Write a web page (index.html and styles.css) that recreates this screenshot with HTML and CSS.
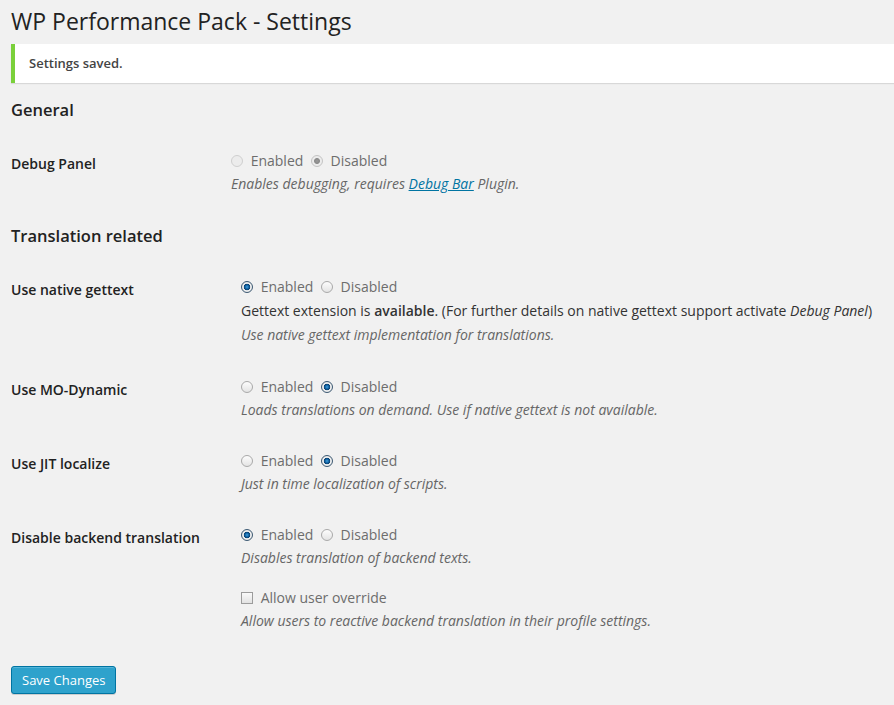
FILE: index.html
```html
<!DOCTYPE html>
<html lang="en">
<head>
    <meta charset="UTF-8">
    <title>WP Performance Pack - Settings</title>
    <link rel="stylesheet" href="styles.css">
</head>
<body>
    <div class="wrap">
        <h2 class="page-title">WP Performance Pack - Settings</h2>

        <div class="notice updated">
            <p>Settings saved.</p>
        </div>

        <form>
            <h3 class="section-title">General</h3>
            <table class="form-table">
                <tr>
                    <th>Debug Panel</th>
                    <td>
                        <label class="choice is-disabled"><input type="radio" name="debug" disabled> Enabled</label>
                        <label class="choice is-disabled"><input type="radio" name="debug" checked disabled> Disabled</label>
                        <p class="description">Enables debugging, requires <a href="#">Debug Bar</a> Plugin.</p>
                    </td>
                </tr>
            </table>

            <h3 class="section-title">Translation related</h3>
            <table class="form-table form-table-wide">
                <tr class="row-gettext">
                    <th>Use native gettext</th>
                    <td>
                        <label class="choice"><input type="radio" name="gettext" checked> Enabled</label>
                        <label class="choice"><input type="radio" name="gettext"> Disabled</label>
                        <p class="info">Gettext extension is <strong>available</strong>. (For further details on native gettext support activate <em>Debug Panel</em>)</p>
                        <p class="description info-after">Use native gettext implementation for translations.</p>
                    </td>
                </tr>
                <tr>
                    <th>Use MO-Dynamic</th>
                    <td>
                        <label class="choice"><input type="radio" name="mo"> Enabled</label>
                        <label class="choice"><input type="radio" name="mo" checked> Disabled</label>
                        <p class="description">Loads translations on demand. Use if native gettext is not available.</p>
                    </td>
                </tr>
                <tr>
                    <th>Use JIT localize</th>
                    <td>
                        <label class="choice"><input type="radio" name="jit"> Enabled</label>
                        <label class="choice"><input type="radio" name="jit" checked> Disabled</label>
                        <p class="description">Just in time localization of scripts.</p>
                    </td>
                </tr>
                <tr>
                    <th>Disable backend translation</th>
                    <td>
                        <label class="choice"><input type="radio" name="backend" checked> Enabled</label>
                        <label class="choice"><input type="radio" name="backend"> Disabled</label>
                        <p class="description">Disables translation of backend texts.</p>
                        <label class="choice choice-block"><input type="checkbox"> Allow user override</label>
                        <p class="description">Allow users to reactive backend translation in their profile settings.</p>
                    </td>
                </tr>
            </table>

            <p class="submit">
                <button type="button" class="button-primary">Save Changes</button>
            </p>
        </form>
    </div>
</body>
</html>
```

FILE: styles.css
```css
body {
    margin: 0;
    padding: 0;
    background-color: #f1f1f1;
    color: #444;
    font-family: "Open Sans", sans-serif;
    font-size: 13px;
}
.wrap {
    margin: 0 0 0 11px;
}
.page-title {
    margin: 0;
    padding: 7px 0 4px;
    font-size: 23px;
    font-weight: 400;
    line-height: 29px;
    color: #222;
}
.notice {
    margin: 4px 0 0;
    padding: 1px 12px;
    background-color: #fff;
    border-left: 4px solid #7ad03a;
    box-shadow: 0 1px 1px 0 rgba(0, 0, 0, 0.1);
}
.notice p {
    margin: 6.5px 0;
    padding: 2px;
    font-weight: 600;
    line-height: 19.5px;
}
.section-title {
    margin: 15px 0 15px;
    font-size: 16.5px;
    font-weight: 600;
    line-height: 22px;
    color: #222;
}
.section-title:first-child {
    margin-top: 16px;
}
.form-table {
    border-collapse: collapse;
    border-spacing: 0;
    font-size: 14px;
}
.form-table th {
    width: 200px;
    padding: 20px 10px 16px 0;
    text-align: left;
    vertical-align: top;
    font-weight: 600;
    line-height: 16px;
    color: #222;
}
.form-table-wide th {
    width: 210px;
}
.form-table td {
    padding: 15px 10px 16px;
    vertical-align: top;
    line-height: 20px;
}
.form-table .row-gettext td {
    padding-bottom: 17px;
}
.form-table p {
    margin: 0;
}
.choice {
    color: #6d6d6d;
    margin-right: 4px;
}
.choice-block {
    display: block;
    margin-top: 20px;
}
.choice input {
    -webkit-appearance: none;
    appearance: none;
    width: 12px;
    height: 12px;
    margin: 0 4px 0 0;
    vertical-align: -1px;
    border: 1px solid #a9a9a9;
    border-radius: 50%;
    background: linear-gradient(#fdfdfd, #e4e4e4);
}
.choice input[type="checkbox"] {
    border-radius: 0;
    border-color: #9c9c9c;
    background: linear-gradient(#fafafa, #e2e2e2);
}
.choice input:checked {
    border-color: #3d5a73;
    background: radial-gradient(circle, #3fa0e0 0, #0e5d9c 2px, #0a3f6e 3px, #f4f4f4 3.6px, #dcdcdc 6px);
}
.choice input:disabled {
    border-color: #cfcfcf;
    background: #ececec;
}
.choice input:disabled:checked {
    border-color: #c4c4c4;
    background: radial-gradient(circle, #9a9a9a 0, #8a8a8a 2.5px, #ececec 3.4px, #ececec 6px);
}
.info {
    color: #333;
    margin-top: 4px !important;
}
.info strong {
    font-weight: 600;
}
.description {
    margin-top: 3px !important;
    font-style: italic;
    color: #666;
}
.info-after {
    margin-top: 4px !important;
}
.description a {
    color: #0074a2;
}
.submit {
    margin: 0;
    padding: 19px 0;
}
.button-primary {
    height: 28px;
    margin: 0;
    padding: 0 10px 1px;
    font-family: "Open Sans", sans-serif;
    font-size: 13px;
    line-height: 26px;
    color: #fff;
    background-color: #2ea2cc;
    border: 1px solid #0074a2;
    border-radius: 3px;
    box-shadow: inset 0 1px 0 rgba(120, 200, 230, 0.5), 0 1px 0 rgba(0, 0, 0, 0.15);
    cursor: pointer;
}
```
